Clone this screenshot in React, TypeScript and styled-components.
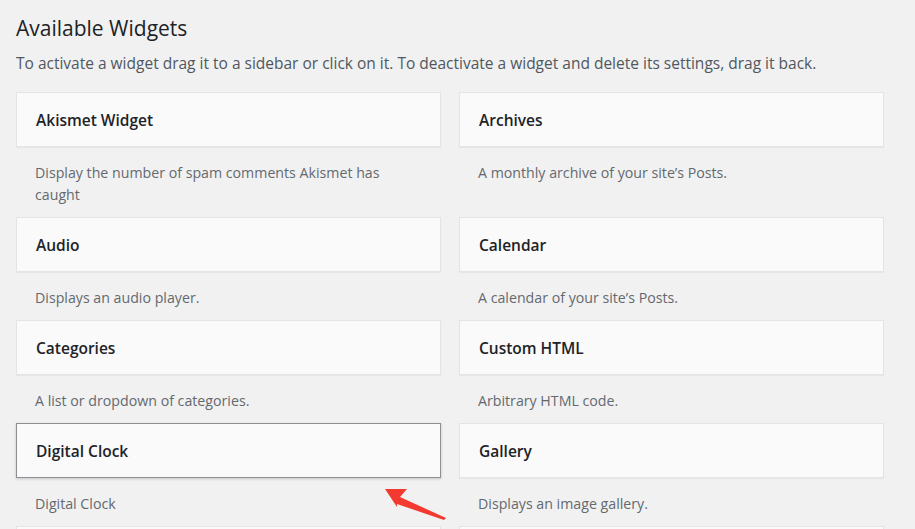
import React from "react";
import styled, { createGlobalStyle } from "styled-components";

const Global = createGlobalStyle`
  html, body { margin: 0; padding: 0; background: #f1f1f1; }
  body { font-family: "Open Sans", "Noto Sans", sans-serif; overflow: hidden; }
`;

const Page = styled.div`
  position: relative;
  padding: 13px 0 0 16px;
  width: 868px;
`;

const Title = styled.h2`
  margin: 0;
  font-size: 21px;
  font-weight: 400;
  line-height: 30px;
  color: #1d2327;
`;

const Intro = styled.p`
  margin: 9px 0 18px;
  font-size: 15.5px;
  line-height: 22px;
  color: #50575e;
`;

const Grid = styled.div`
  display: grid;
  grid-template-columns: 425px 425px;
  column-gap: 18px;
  align-items: start;
`;

const Item = styled.div``;

const Card = styled.div<{ $active?: boolean }>`
  box-sizing: border-box;
  height: 55px;
  display: flex;
  align-items: center;
  padding: 0 19px;
  background: #fafafa;
  border: 1px solid ${(p) => (p.$active ? "#8c8f94" : "#e2e4e7")};
  box-shadow: ${(p) =>
    p.$active ? "0 1px 3px rgba(0,0,0,0.18)" : "0 1px 1px rgba(0,0,0,0.04)"};
  font-size: 15.5px;
  font-weight: 600;
  color: #1d2327;
`;

const Desc = styled.div`
  padding: 14.5px 40px 11px 19px;
  font-size: 14.2px;
  line-height: 22.4px;
  color: #646970;
`;

const Arrow = styled.svg`
  position: absolute;
  left: 380px;
  top: 484px;
`;

const widgets: [string, string][] = [
  ["Akismet Widget", "Display the number of spam comments Akismet has caught"],
  ["Archives", "A monthly archive of your site’s Posts."],
  ["Audio", "Displays an audio player."],
  ["Calendar", "A calendar of your site’s Posts."],
  ["Categories", "A list or dropdown of categories."],
  ["Custom HTML", "Arbitrary HTML code."],
  ["Digital Clock", "Digital Clock"],
  ["Gallery", "Displays an image gallery."],
  ["Image", "Displays an image."],
  ["Links", "Your blogroll"],
];

export default function App() {
  return (
    <>
      <Global />
      <Page>
        <Title>Available Widgets</Title>
        <Intro>
          To activate a widget drag it to a sidebar or click on it. To deactivate a widget and delete its settings, drag it back.
        </Intro>
        <Grid>
          {widgets.map(([name, desc]) => (
            <Item key={name}>
              <Card $active={name === "Digital Clock"}>{name}</Card>
              <Desc>{desc}</Desc>
            </Item>
          ))}
        </Grid>
        <Arrow width="70" height="40" viewBox="0 0 70 40">
          <polygon points="5,5 27,5 20,13 66,34 64,36 17,20 17,23" fill="#f23a30" />
        </Arrow>
      </Page>
    </>
  );
}
